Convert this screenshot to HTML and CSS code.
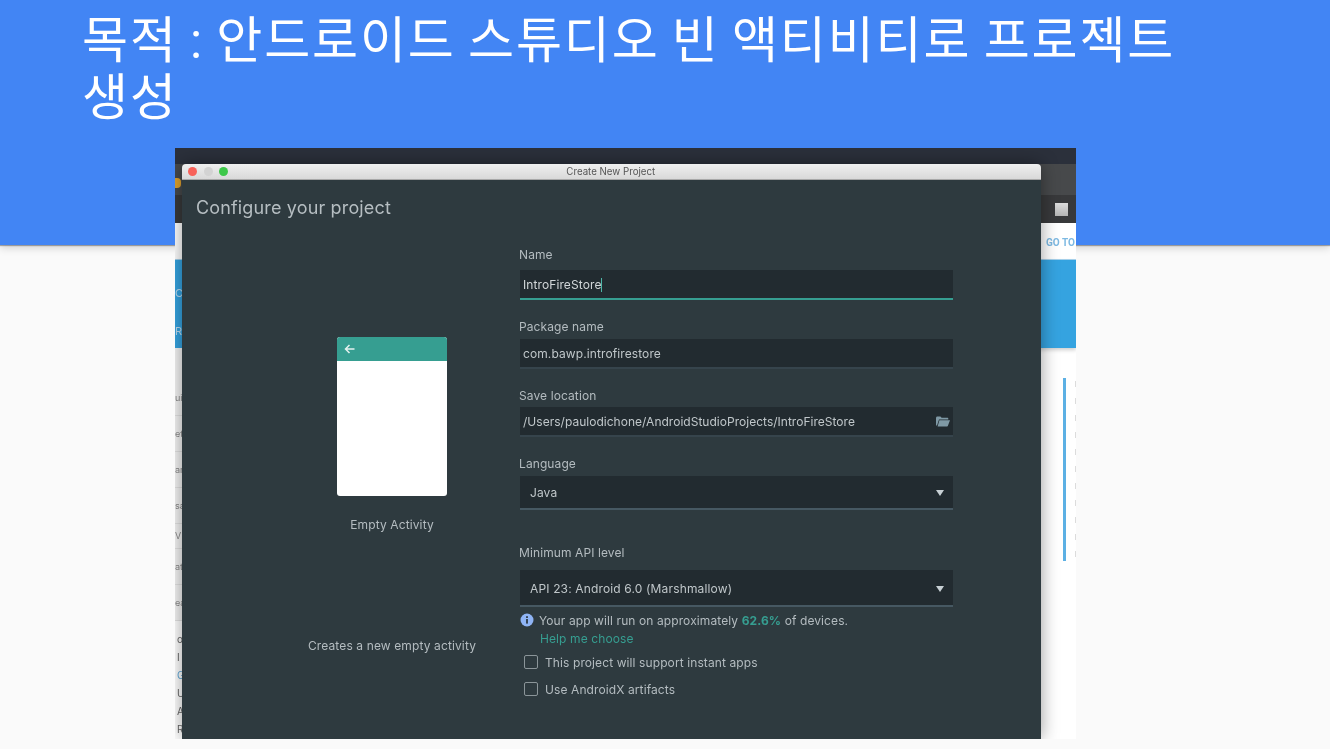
FILE: index.html
```html
<!DOCTYPE html>
<html lang="ko">
<head>
    <meta charset="UTF-8">
    <meta name="viewport" content="width=device-width, initial-scale=1.0">
    <title>목적 : 안드로이드 스튜디오 빈 액티비티로 프로젝트 생성</title>
    <link rel="stylesheet" href="styles.css">
</head>
<body>
    <header class="slide-header">
        <h1>목적 : 안드로이드 스튜디오 빈 액티비티로 프로젝트 생성</h1>
    </header>

    <div class="shot">
        <div class="shot-inner">
            <div class="site-topbar"></div>
            <div class="site-chrome">
                <span class="site-logo"></span>
            </div>
            <div class="site-toolbar">
                <span class="site-toolbar-icon"></span>
            </div>
            <div class="site-nav">GO TO</div>
            <div class="site-hero"><span class="hero-a">C</span><span class="hero-b">R</span></div>
            <div class="site-main">
                <ul class="site-list">
                    <li>uic</li>
                    <li>et</li>
                    <li>ar</li>
                    <li>sa</li>
                    <li class="short">V</li>
                    <li>ati</li>
                    <li>ea</li>
                    <li class="plain section">oc</li>
                    <li class="plain">I</li>
                    <li class="plain link">G</li>
                    <li class="plain">U</li>
                    <li class="plain">A</li>
                    <li class="plain">R</li>
                </ul>
                <div class="site-aside">
                    <div class="aside-note"></div>
                    <div class="aside-lines">
                        <i></i><i></i><i></i><i></i><i></i><i></i><i></i><i></i><i></i><i></i><i></i>
                    </div>
                </div>
            </div>
        </div>

        <div class="dialog">
            <div class="dialog-title">
                <span class="light red"></span>
                <span class="light grey"></span>
                <span class="light green"></span>
                <span class="dialog-name">Create New Project</span>
            </div>
            <div class="dialog-body">
                <h2>Configure your project</h2>
                <div class="columns">
                    <div class="preview">
                        <div class="phone">
                            <div class="phone-bar">
                                <svg width="11" height="10" viewBox="0 0 11 10"><path d="M10.5 5H1.5M5.5 1L1.5 5l4 4" fill="none" stroke="#e4f1ef" stroke-width="1.5"/></svg>
                            </div>
                        </div>
                        <div class="preview-name">Empty Activity</div>
                        <div class="preview-desc">Creates a new empty activity</div>
                    </div>
                    <form class="config">
                        <label class="lbl">Name</label>
                        <div class="input active">IntroFireStore<span class="caret"></span></div>

                        <label class="lbl gap-top lbl-b">Package name</label>
                        <div class="input">com.bawp.introfirestore</div>

                        <label class="lbl gap-top lbl-c">Save location</label>
                        <div class="input path">
                            /Users/paulodichone/AndroidStudioProjects/IntroFireStore
                            <svg class="folder" width="14" height="11" viewBox="0 0 14 11"><path d="M0 2.2C0 1.2.6.6 1.4.6h3l1.2 1.2h5.6c.7 0 1.1.4 1.1 1v.8H3L1 9.6H.4C.1 9.6 0 9.3 0 9z" fill="#7f99a5"/><path d="M3.4 4.2H14l-2.2 5.8c-.1.3-.3.4-.6.4H1.6z" fill="#7f99a5"/></svg>
                        </div>

                        <label class="lbl gap-top lbl-b">Language</label>
                        <div class="select lang">Java<span class="arrow"></span></div>

                        <label class="lbl gap-wide">Minimum API level</label>
                        <div class="select api">API 23: Android 6.0 (Marshmallow)<span class="arrow"></span></div>

                        <div class="hint">
                            <svg width="14" height="14" viewBox="0 0 14 14"><circle cx="7" cy="7" r="6.5" fill="#8fb4f5"/><rect x="6.1" y="6" width="1.8" height="4.6" fill="#2d3a45"/><rect x="6.1" y="3.2" width="1.8" height="1.8" fill="#2d3a45"/></svg>
                            <span>Your app will run on approximately <b>62.6%</b> of devices.</span>
                        </div>
                        <div class="help">Help me choose</div>
                        <div class="check first"><span class="box"></span>This project will support instant apps</div>
                        <div class="check"><span class="box"></span>Use AndroidX artifacts</div>
                    </form>
                </div>
            </div>
        </div>
    </div>
</body>
</html>
```

FILE: styles.css
```css
* {
    box-sizing: border-box;
}
body {
    margin: 0;
    height: 749px;
    overflow: hidden;
    position: relative;
    background: #fafafa;
    font-family: Inter, "Liberation Sans", sans-serif;
}

/* slide */
.slide-header {
    height: 245px;
    padding: 13px 150px 0 82px;
    background: #4285f4;
    box-shadow: 0 1px 1px rgba(0, 0, 0, 0.3), 0 3px 8px rgba(0, 0, 0, 0.16);
}
.slide-header h1 {
    margin: 0;
    color: #fff;
    font-family: Roboto, "Noto Sans CJK KR", sans-serif;
    font-size: 50px;
    font-weight: 400;
    line-height: 57px;
    letter-spacing: 1.88px;
    word-spacing: -2px;
}

/* screenshot pasted on the slide */
.shot {
    position: absolute;
    left: 175px;
    top: 148px;
    width: 901px;
    height: 591px;
    overflow: hidden;
    background: #fff;
    filter: blur(0.45px);
}
.site-topbar {
    height: 16px;
    background: #2b303b;
}
.site-chrome {
    height: 31px;
    padding-top: 14px;
    background: #47494b;
}
.site-logo {
    display: block;
    width: 6px;
    height: 10px;
    border-radius: 0 4px 4px 0;
    background: #e0a32e;
}
.site-toolbar {
    height: 28px;
    padding: 8px 8px 0 0;
    display: flex;
    justify-content: flex-end;
    background: #38393b;
}
.site-toolbar-icon {
    width: 13px;
    height: 13px;
    background: linear-gradient(#dcdcdc, #b4b4b4);
}
.site-nav {
    height: 37px;
    padding: 14px 0 0 871px;
    overflow: hidden;
    white-space: nowrap;
    color: #7db9e2;
    font-family: Roboto, sans-serif;
    font-size: 10px;
    font-weight: 700;
    background: #fff;
    border-bottom: 1px solid #a9d5ef;
}
.site-hero {
    height: 88px;
    padding: 26px 0 0 0;
    color: #bcdcf1;
    font-size: 11px;
    background: #35a3e0;
    box-shadow: 0 2px 4px rgba(0, 0, 0, 0.2);
    display: flex;
    flex-direction: column;
    gap: 24px;
    line-height: 14px;
}
.site-main {
    display: flex;
    justify-content: space-between;
}
.site-list {
    width: 7px;
    margin: 0;
    padding: 32px 0 0;
    list-style: none;
    overflow: hidden;
    color: #8a8a8a;
    font-size: 9px;
    background: #f4f4f4;
}
.site-list li {
    height: 36px;
    padding-top: 12px;
    border-bottom: 1px solid #e2e2e2;
    white-space: nowrap;
}
.site-list li.short {
    height: 25px;
    padding-top: 6px;
}
.site-list li.plain {
    height: 18px;
    padding: 3px 0 0 2px;
    border: 0;
    color: #666;
    font-size: 10px;
    background: #fff;
}
.site-list li.section {
    height: 27px;
    padding-top: 12px;
}
.site-list li.link {
    color: #5aa6d8;
}
.site-aside {
    width: 35px;
    padding: 30px 0 0 22px;
    display: flex;
    gap: 9px;
}
.aside-note {
    width: 3px;
    height: 183px;
    background: #5cb0e4;
}
.aside-lines {
    padding-top: 3px;
}
.aside-lines i {
    display: block;
    width: 1px;
    height: 6px;
    margin-bottom: 11px;
    background: #dcdcdc;
}

/* android studio window */
.dialog {
    position: absolute;
    left: 7px;
    top: 16px;
    width: 859px;
    height: 575px;
    border-radius: 4px 4px 0 0;
    box-shadow: 0 0 18px rgba(0, 0, 0, 0.4);
}
.dialog-title {
    height: 16px;
    padding-left: 6px;
    display: flex;
    align-items: center;
    gap: 6.5px;
    position: relative;
    background: linear-gradient(#efefef, #d9d9d9);
    border-radius: 4px 4px 0 0;
    border-bottom: 1px solid #a8a8a8;
}
.light {
    width: 9px;
    height: 9px;
    border-radius: 50%;
}
.light.red {
    background: #f8625a;
}
.light.grey {
    background: #d3d3d3;
}
.light.green {
    background: #3ec84a;
}
.dialog-name {
    flex: 1;
    margin-right: 54px;
    text-align: center;
    color: #555;
    font-size: 9.7px;
}
.dialog-body {
    height: 559px;
    padding: 17px 0 0 14px;
    background: #2e3a3f;
    color: #b4bcc0;
}
.dialog-body h2 {
    margin: 0;
    height: 22px;
    font-size: 18px;
    font-weight: 400;
    line-height: 22px;
    letter-spacing: 0.15px;
    color: #b6bec2;
}
.columns {
    display: flex;
}
.preview {
    width: 323px;
    padding: 118px 0 0 141px;
}
.phone {
    width: 110px;
    height: 159px;
    border-radius: 3px;
    overflow: hidden;
    background: #fff;
}
.phone-bar {
    height: 24px;
    padding: 7px 0 0 7px;
    background: #369e91;
}
.phone-bar svg {
    display: block;
}
.preview-name,
.preview-desc {
    width: 250px;
    margin-left: -70px;
    text-align: center;
    font-size: 12px;
    line-height: 16px;
    letter-spacing: 0.12px;
}
.preview-name {
    margin-top: 21px;
}
.preview-desc {
    margin-top: 105px;
}

.config {
    width: 434px;
    padding-top: 28px;
    font-size: 12px;
    letter-spacing: 0.1px;
}
.lbl {
    display: block;
    height: 16px;
    margin-bottom: 7px;
    line-height: 16px;
}
.gap-top {
    margin-top: 19px;
}
.gap-wide {
    margin-top: 35px;
    margin-bottom: 9px;
}
.lbl-b {
    margin-bottom: 4px;
}
.lbl-c {
    margin-bottom: 3px;
}
.input,
.select {
    display: flex;
    align-items: center;
    height: 30px;
    margin-left: 1px;
    padding: 1px 0 0 3px;
    background: #222b30;
    border-bottom: 2px solid #36444c;
    color: #c0c7ca;
    position: relative;
}
.input.active {
    border-bottom-color: #369e91;
    color: #d2d7d9;
}
.input.path {
    letter-spacing: 0.02px;
}
.caret {
    width: 1px;
    height: 14px;
    background: #4db6a8;
}
.folder {
    position: absolute;
    right: 3px;
    top: 9px;
}
.select {
    padding-left: 10px;
    border-bottom-color: #465862;
}
.select.lang {
    height: 34px;
}
.select.api {
    height: 37px;
    letter-spacing: 0.15px;
}
.arrow {
    position: absolute;
    right: 9px;
    top: 50%;
    margin-top: -2px;
    border-left: 4px solid transparent;
    border-right: 4px solid transparent;
    border-top: 6px solid #c8d0d4;
}
.hint {
    display: flex;
    align-items: center;
    gap: 5px;
    height: 16px;
    margin-top: 5px;
    padding-left: 1px;
}
.hint b {
    color: #369e91;
}
.help {
    height: 16px;
    margin-top: 3px;
    padding-left: 21px;
    line-height: 16px;
    color: #369e91;
}
.check {
    display: flex;
    align-items: center;
    gap: 7px;
    height: 16px;
    margin-top: 11px;
    padding-left: 5px;
}
.check.first {
    margin-top: 7px;
}
.box {
    width: 14px;
    height: 14px;
    border: 1px solid #8b9599;
    border-radius: 2px;
}
```
